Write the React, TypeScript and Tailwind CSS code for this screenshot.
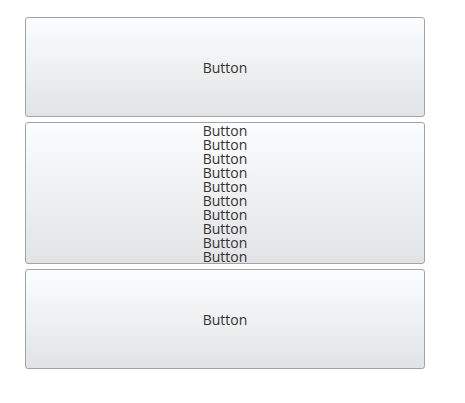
import React from "react";

const btn =
  "w-[400px] rounded-[3px] border border-[#a3a3a3] bg-gradient-to-b from-[#fcfdfe] to-[#e2e3e5] text-[#333] text-[14px] leading-[14px] flex flex-col items-center justify-center";

export default function App() {
  return (
    <div className="w-[465px] h-[403px] bg-white pl-[25px] pt-[17px] flex flex-col gap-[5px]" style={{ fontFamily: '"Open Sans", "Noto Sans", sans-serif' }}>
      <div className={btn + " h-[100px]"}>
        <span className="translate-y-[1px]">Button</span>
      </div>
      <div className={btn}>
        {Array.from({ length: 10 }).map((_, i) => (
          <span key={i} className="translate-y-[1px]">Button</span>
        ))}
      </div>
      <div className={btn + " h-[100px]"}>
        <span className="translate-y-[1px]">Button</span>
      </div>
    </div>
  );
}
